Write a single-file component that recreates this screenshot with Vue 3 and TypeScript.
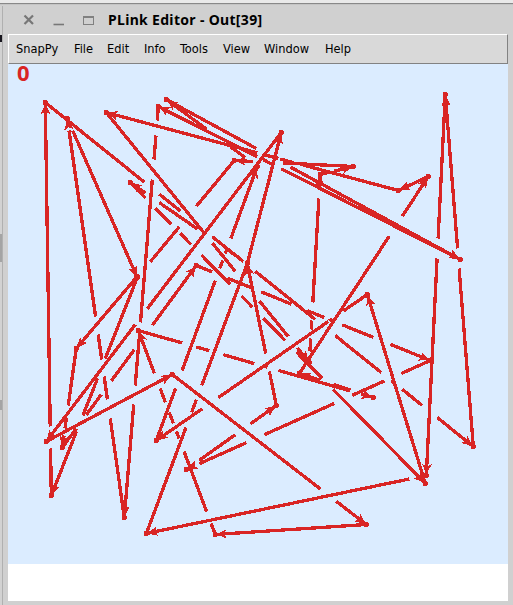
<script setup lang="ts">
type Point = [number, number]

interface Strand {
  from: Point
  to: Point
  // visible stretches, as start/end pairs measured along the dominant axis
  spans: Point[]
  axis: 'x' | 'y'
  arrow?: boolean
}

const menus = ['SnapPy', 'File', 'Edit', 'Info', 'Tools', 'View', 'Window', 'Help']

function strand(from: Point, to: Point, axis: 'x' | 'y', spans: Point[], arrow = true): Strand {
  return { from, to, axis, spans, arrow }
}

// Each strand points from `from` to `to`.
const strands: Strand[] = [
  strand([51, 495], [45, 102], 'y', [[495, 448], [426, 102]]),
  strand([45, 102], [473, 446], 'x', [[45, 144], [159, 180], [212, 243], [255, 315], [335, 381], [391, 394], [402, 422], [437, 473]]),
  strand([124, 517], [67, 118], 'y', [[517, 418], [399, 376], [359, 334], [316, 130], [125, 118]]),
  strand([67, 118], [137, 277], 'y', [[118, 123], [130, 277]]),
  strand([158, 107], [124, 517], 'y', [[107, 120], [135, 159], [179, 322], [333, 385], [404, 517]]),
  strand([106, 112], [309, 362], 'x', [[106, 203], [212, 235], [259, 288], [297, 309]]),
  strand([130, 182], [425, 483], 'x', [[130, 145], [155, 171], [180, 191], [201, 230], [241, 252], [263, 285], [296, 322], [333, 425]]),
  strand([247, 263], [130, 182], 'x', [[238, 228], [197, 159], [145, 130]]),
  strand([146, 533], [247, 263], 'y', [[533, 427], [412, 399], [385, 263]], false),
  strand([247, 263], [281, 132], 'y', [[263, 132]]),
  strand([276, 405], [247, 263], 'y', [[405, 371], [353, 263]]),
  strand([281, 132], [46, 441], 'x', [[281, 147], [135, 46]]),
  strand([62, 447], [196, 265], 'x', [[62, 76], [86, 101], [111, 134], [152, 196]]),
  strand([137, 277], [51, 495], 'y', [[277, 358], [378, 415], [431, 495]]),
  strand([136, 277], [76, 348], 'x', [[136, 76]]),
  strand([76, 348], [62, 447], 'y', [[348, 405], [417, 428], [435, 447]]),
  strand([46, 441], [172, 374], 'x', [[46, 172]]),
  strand([172, 374], [366, 524], 'x', [[172, 320], [336, 366]]),
  strand([366, 524], [215, 534], 'x', [[366, 215]]),
  strand([215, 534], [138, 330], 'y', [[534, 523], [511, 451], [438, 431], [423, 412], [402, 388], [373, 330]]),
  strand([138, 330], [373, 397], 'x', [[138, 182], [196, 209], [223, 254], [263, 267], [278, 350], [361, 373]]),
  strand([373, 397], [299, 373], 'x', [[373, 361], [350, 333], [320, 299]]),
  strand([196, 265], [430, 360], 'x', [[196, 212], [227, 252], [261, 291], [307, 324], [342, 373], [390, 430]]),
  strand([430, 360], [186, 469], 'x', [[430, 401], [384, 352], [334, 264], [246, 199], [193, 186]]),
  strand([186, 469], [276, 405], 'x', [[199, 235], [250, 276]]),
  strand([367, 294], [156, 440], 'x', [[367, 343], [332, 329], [328, 218], [202, 156]]),
  strand([156, 440], [257, 166], 'y', [[440, 388], [370, 280], [268, 260], [253, 249], [238, 166]]),
  strand([234, 160], [137, 277], 'x', [[234, 196], [179, 150], [139, 137]], false),
  strand([353, 166], [234, 160], 'x', [[353, 283], [253, 234]]),
  strand([398, 190], [106, 112], 'x', [[398, 303], [293, 280], [278, 265], [257, 106]]),
  strand([428, 176], [398, 190], 'x', [[428, 398]]),
  strand([299, 373], [428, 176], 'x', [[299, 389], [402, 428]]),
  strand([320, 174], [353, 166], 'x', [[320, 328], [334, 353]]),
  strand([309, 362], [320, 174], 'y', [[362, 357], [351, 338], [329, 320], [302, 198], [187, 174]]),
  strand([166, 99], [460, 259], 'x', [[166, 256], [290, 460]]),
  strand([460, 259], [158, 106], 'x', [[460, 281], [272, 263], [257, 158]]),
  strand([257, 166], [166, 99], 'x', [[244, 230], [206, 166]]),
  strand([473, 446], [445, 94], 'y', [[446, 268], [248, 94]]),
  strand([445, 94], [426, 475], 'y', [[94, 238], [258, 475]]),
  strand([426, 475], [146, 533], 'x', [[426, 416], [409, 146]]),
  strand([425, 483], [367, 294], 'y', [[483, 294]]),
]

function pointAt(s: Strand, v: number): Point {
  const k = s.axis === 'x' ? 0 : 1
  const t = (v - s.from[k]) / (s.to[k] - s.from[k])
  return [s.from[0] + (s.to[0] - s.from[0]) * t, s.from[1] + (s.to[1] - s.from[1]) * t]
}

function linePath(s: Strand): string {
  return s.spans
    .map(([a, b]) => {
      const p = pointAt(s, a)
      const q = pointAt(s, b)
      return `M${p[0].toFixed(1)} ${p[1].toFixed(1)}L${q[0].toFixed(1)} ${q[1].toFixed(1)}`
    })
    .join('')
}

function headPoints(s: Strand): string {
  const dx = s.to[0] - s.from[0]
  const dy = s.to[1] - s.from[1]
  const len = Math.hypot(dx, dy)
  const ux = dx / len
  const uy = dy / len
  const at = (back: number, side: number) =>
    `${(s.to[0] - ux * back - uy * side).toFixed(1)},${(s.to[1] - uy * back + ux * side).toFixed(1)}`
  return [at(1, 0), at(11.5, 4.8), at(9, 0), at(11.5, -4.8)].join(' ')
}

const vertices: Point[] = Array.from(
  new Map(strands.flatMap((s) => [s.from, s.to]).map((p) => [p.join(), p] as [string, Point])).values(),
)
</script>

<template>
  <div class="desktop">
    <div class="behind">
      <i class="ink"></i><i class="scroll"></i><i class="scroll low"></i>
    </div>
    <div class="window">
      <header class="titlebar">
        <svg class="controls" width="94" height="16" viewBox="0 0 94 16">
          <path d="M16.500 3.500L25 12M25 3.500L16.500 12" stroke="#777" stroke-width="2.200" fill="none" />
          <path d="M45.500 12.500h10.500" stroke="#777" stroke-width="1.600" />
          <rect x="75.500" y="4.500" width="10" height="8" fill="none" stroke="#808080" />
          <path d="M75 5h11" stroke="#808080" stroke-width="2" />
        </svg>
        <h1>PLink Editor - Out[39]</h1>
      </header>
      <div class="body">
        <nav class="menubar">
          <span v-for="m in menus" :key="m">{{ m }}</span>
        </nav>
        <main class="canvas">
          <svg class="link" width="499" height="500" viewBox="8 64 499 500" shape-rendering="crispEdges">
            <g transform="translate(0.300 0.500)">
              <g v-for="(s, i) in strands" :key="i">
                <path :d="linePath(s)" class="line" />
                <polygon v-if="s.arrow" :points="headPoints(s)" class="fill" />
              </g>
              <circle v-for="(v, i) in vertices" :key="'v' + i" :cx="v[0]" :cy="v[1]" r="2.600" class="fill" />
            </g>
          </svg>
          <span class="count">0</span>
        </main>
        <footer class="info"></footer>
      </div>
    </div>
  </div>
</template>

<style>
body {
  margin: 0;
  overflow: hidden;
}
</style>

<style scoped>
.desktop {
  display: flex;
  box-sizing: border-box;
  width: 513px;
  height: 605px;
  padding-top: 3px;
  background: linear-gradient(#e9e9e9 0 3px, #888 3px 4px, #c4c4c4 4px 5px, #d0d0d0 5px);
}
.behind {
  width: 2px;
  margin-top: 3px;
  border-right: 1px solid #b0b0b0;
  display: flex;
  flex-direction: column;
  background: #d2d2d2;
}
.behind .ink {
  height: 7px;
  margin-top: 29px;
  background: #17151d;
}
.behind .scroll {
  height: 28px;
  margin-top: 192px;
  background: #a4a4a4;
}
.behind .low {
  height: 10px;
  margin-top: 138px;
}
.window {
  flex: 1;
  display: flex;
  flex-direction: column;
  margin-top: 2px;
  padding: 0 5px 4px 5px;
  background: #d0d0d0;
  border-top-left-radius: 5px;
}
.titlebar {
  display: flex;
  align-items: center;
  height: 29px;
}
.controls {
  flex: none;
  margin: 1px 6px 0 0;
}
h1 {
  margin: 0;
  font: bold 14px/20px "Noto Sans", "Open Sans", sans-serif;
  letter-spacing: 0.32px;
  color: #000;
  white-space: nowrap;
}
.body {
  flex: 1;
  display: flex;
  flex-direction: column;
  width: 500px;
}
.menubar {
  box-sizing: border-box;
  display: grid;
  grid-template-columns: 58px 33px 37px 36px 43px 41px 61px 40px;
  align-items: center;
  height: 30px;
  padding-left: 7px;
  border: 1px solid #fff;
  border-right-color: #828282;
  border-bottom-color: #828282;
  background: #d9d9d9;
  font: 12.700px/20px "DejaVu Sans Condensed", "DejaVu Sans", sans-serif;
  font-stretch: condensed;
  color: #000;
}
.canvas {
  position: relative;
  width: 500px;
  height: 500px;
  background: #dbecff;
}
.link {
  display: block;
}
.line {
  fill: none;
  stroke: #d92525;
  stroke-width: 3.3;
}
.fill {
  fill: #d92525;
}
.count {
  position: absolute;
  left: 9px;
  top: -4px;
  font: bold 22px/24px "Noto Sans", sans-serif;
  color: #d92525;
}
.info {
  flex: 1;
  background: #fff;
}
</style>
